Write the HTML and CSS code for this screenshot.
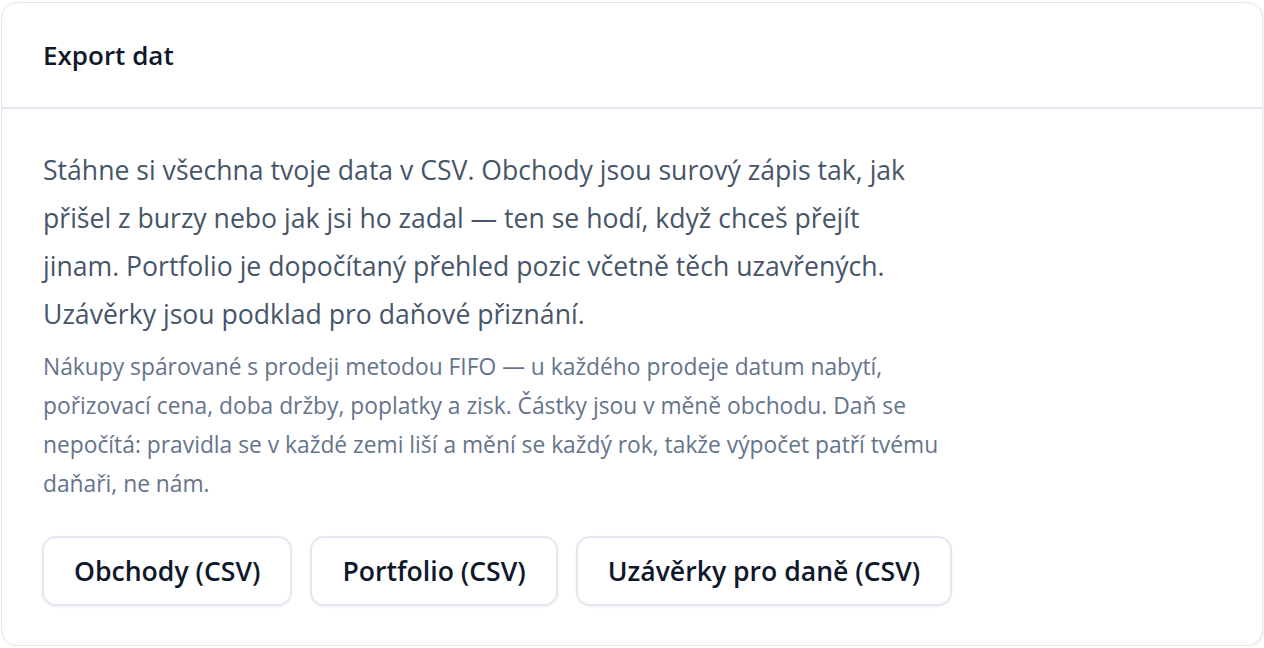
FILE: index.html
```html
<!DOCTYPE html>
<html lang="cs">

<head>
    <meta charset="UTF-8">
    <meta name="viewport" content="width=device-width, initial-scale=1.0">
    <title>Export dat</title>
    <link rel="stylesheet" href="styles.css">
</head>

<body>
    <div class="card">
        <div class="cardHeader">
            <h2 class="cardTitle">Export dat</h2>
        </div>
        <div class="cardBody">
            <p class="lead">Stáhne si všechna tvoje data v CSV. Obchody jsou surový zápis tak, jak přišel z burzy nebo jak jsi ho zadal — ten se hodí, když chceš přejít jinam. Portfolio je dopočítaný přehled pozic včetně těch uzavřených. Uzávěrky jsou podklad pro daňové přiznání.</p>
            <p class="note">Nákupy spárované s prodeji metodou FIFO — u každého prodeje datum nabytí, pořizovací cena, doba držby, poplatky a zisk. Částky jsou v měně obchodu. Daň se nepočítá: pravidla se v každé zemi liší a mění se každý rok, takže výpočet patří tvému daňaři, ne nám.</p>
            <div class="actions">
                <button type="button" class="btn">Obchody (CSV)</button>
                <button type="button" class="btn">Portfolio (CSV)</button>
                <button type="button" class="btn">Uzávěrky pro daně (CSV)</button>
            </div>
        </div>
    </div>
</body>

</html>
```

FILE: styles.css
```css
html,
body {
    margin: 0;
    background: #fff;
}

body {
    padding: 2px 1px 0 1px;
    font-family: "Open Sans", "Noto Sans", sans-serif;
}

.card {
    border: 1px solid #e2e8f0;
    border-radius: 16px;
    background: #fff;
    box-shadow: 1px 1px 3px rgba(15, 23, 42, 0.08);
}

.cardHeader {
    padding: 0 41px;
    height: 104px;
    display: flex;
    align-items: center;
    border-bottom: 2px solid #e2e8f0;
}

.cardTitle {
    margin: 0;
    font-size: 26px;
    font-weight: 600;
    color: #0f172a;
}

.cardBody {
    padding: 37px 40px 39px 40px;
}

.lead {
    max-width: 895px;
    margin: 0 0 9px 1px;
    font-size: 26.6px;
    line-height: 48px;
    color: #475569;
}

.note {
    max-width: 905px;
    margin: 0 0 0 1px;
    font-size: 22.8px;
    line-height: 39px;
    color: #64748b;
}

.actions {
    display: flex;
    gap: 18px;
    margin-top: 33px;
}

.btn {
    height: 70px;
    padding: 0 30px;
    font-family: inherit;
    font-size: 26.6px;
    font-weight: 600;
    color: #0f172a;
    background: #fff;
    border: 2px solid #e2e8f0;
    border-radius: 14px;
    box-shadow: 0 1px 3px rgba(15, 23, 42, 0.06);
}
```
